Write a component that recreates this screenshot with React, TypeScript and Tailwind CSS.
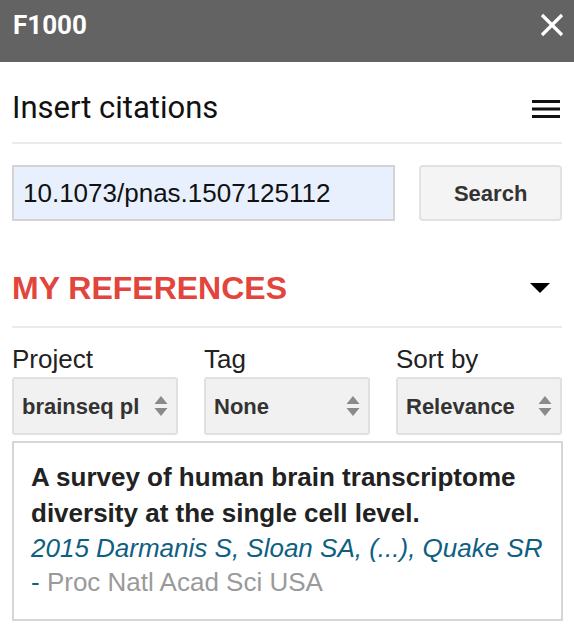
import React, { useState } from 'react';

const SelectArrows: React.FC = () => (
  <svg width="14" height="22" viewBox="0 0 14 22" className="shrink-0">
    <path d="M7 1 L13.5 9 L0.5 9 Z" fill="#8a8a8a" />
    <path d="M7 21 L13.5 13 L0.5 13 Z" fill="#8a8a8a" />
  </svg>
);

interface PickerProps {
  label: string;
  value: string;
}

const Picker: React.FC<PickerProps> = ({ label, value }) => (
  <div className="flex flex-col">
    <div className="text-[26px] leading-[32px] text-[#222]">{label}</div>
    <div className="mt-[2px] h-[58px] flex items-center justify-between rounded-[3px] border-2 border-[#e0e0e0] bg-[#f1f1f1] pl-[8px] pr-[8px]">
      <span className="text-[22px] font-bold text-[#333] whitespace-nowrap overflow-hidden">{value}</span>
      <SelectArrows />
    </div>
  </div>
);

export default function App() {
  const [query, setQuery] = useState('10.1073/pnas.1507125112');

  return (
    <div className="w-[574px] h-[634px] bg-white overflow-hidden font-['Liberation_Sans',Arial,sans-serif]">
      {/* top bar */}
      <div className="h-[62px] bg-[#636363] flex items-start justify-between pl-[13px] pr-[10px] pt-[9px]">
        <span className="text-[26px] leading-[32px] font-bold text-white font-['Roboto','Liberation_Sans',sans-serif]">F1000</span>
        <svg width="24" height="24" viewBox="0 0 24 24" className="mt-[4px]">
          <path d="M2 2 L22 22 M22 2 L2 22" stroke="white" strokeWidth="3.2" />
        </svg>
      </div>

      <div className="px-[12px]">
        {/* title row */}
        <div className="h-[82px] flex items-center justify-between border-b-2 border-[#ebebeb] pt-[13px]">
          <h1 className="text-[31px] text-[#111] font-['Roboto','Liberation_Sans',sans-serif]">Insert citations</h1>
          <svg width="28" height="20" viewBox="0 0 28 20" className="mr-[2px]">
            <rect x="0" y="1" width="28" height="3" fill="#111" />
            <rect x="0" y="8.5" width="28" height="3" fill="#111" />
            <rect x="0" y="16" width="28" height="3" fill="#111" />
          </svg>
        </div>

        {/* search */}
        <div className="mt-[21px] flex items-center gap-[24px]">
          <input
            value={query}
            onChange={e => setQuery(e.target.value)}
            className="w-[384px] h-[56px] border-2 border-[#d4d4d4] bg-[#e8f0fe] px-[9px] text-[26px] text-[#111] outline-none"
          />
          <button className="w-[143px] h-[56px] rounded-[4px] border-2 border-[#e2e2e2] bg-[#f4f4f4] text-[22px] font-bold text-[#333]">
            Search
          </button>
        </div>

        {/* my references */}
        <div className="mt-[34px] h-[73px] flex items-center justify-between border-b-2 border-[#ebebeb] pb-[6px]">
          <h2 className="text-[32px] font-bold text-[#e2453c]">MY REFERENCES</h2>
          <svg width="20" height="12" viewBox="0 0 20 12" className="mr-[12px] mt-[2px]">
            <path d="M0 0 L20 0 L10 10 Z" fill="#000" />
          </svg>
        </div>

        {/* filters */}
        <div className="mt-[15px] grid grid-cols-3 gap-[26px]">
          <Picker label="Project" value="brainseq pl" />
          <Picker label="Tag" value="None" />
          <Picker label="Sort by" value="Relevance" />
        </div>

        {/* result */}
        <div className="mt-[6px] w-[551px] border-2 border-[#d6d6d6] pl-[17px] pr-[12px] pt-[16px] pb-[20px]">
          <div className="text-[26px] leading-[36px] font-bold text-[#222]">
            A survey of human brain transcriptome diversity at the single cell level.
          </div>
          <div className="text-[26px] leading-[34px]">
            <span className="italic text-[#0e6082]">2015 Darmanis S, Sloan SA, (...), Quake SR</span>{' '}
            <span className="text-[#0e6082]">-</span>{' '}
            <span className="text-[#9a9a9a]">Proc Natl Acad Sci USA</span>
          </div>
        </div>
      </div>
    </div>
  );
}
